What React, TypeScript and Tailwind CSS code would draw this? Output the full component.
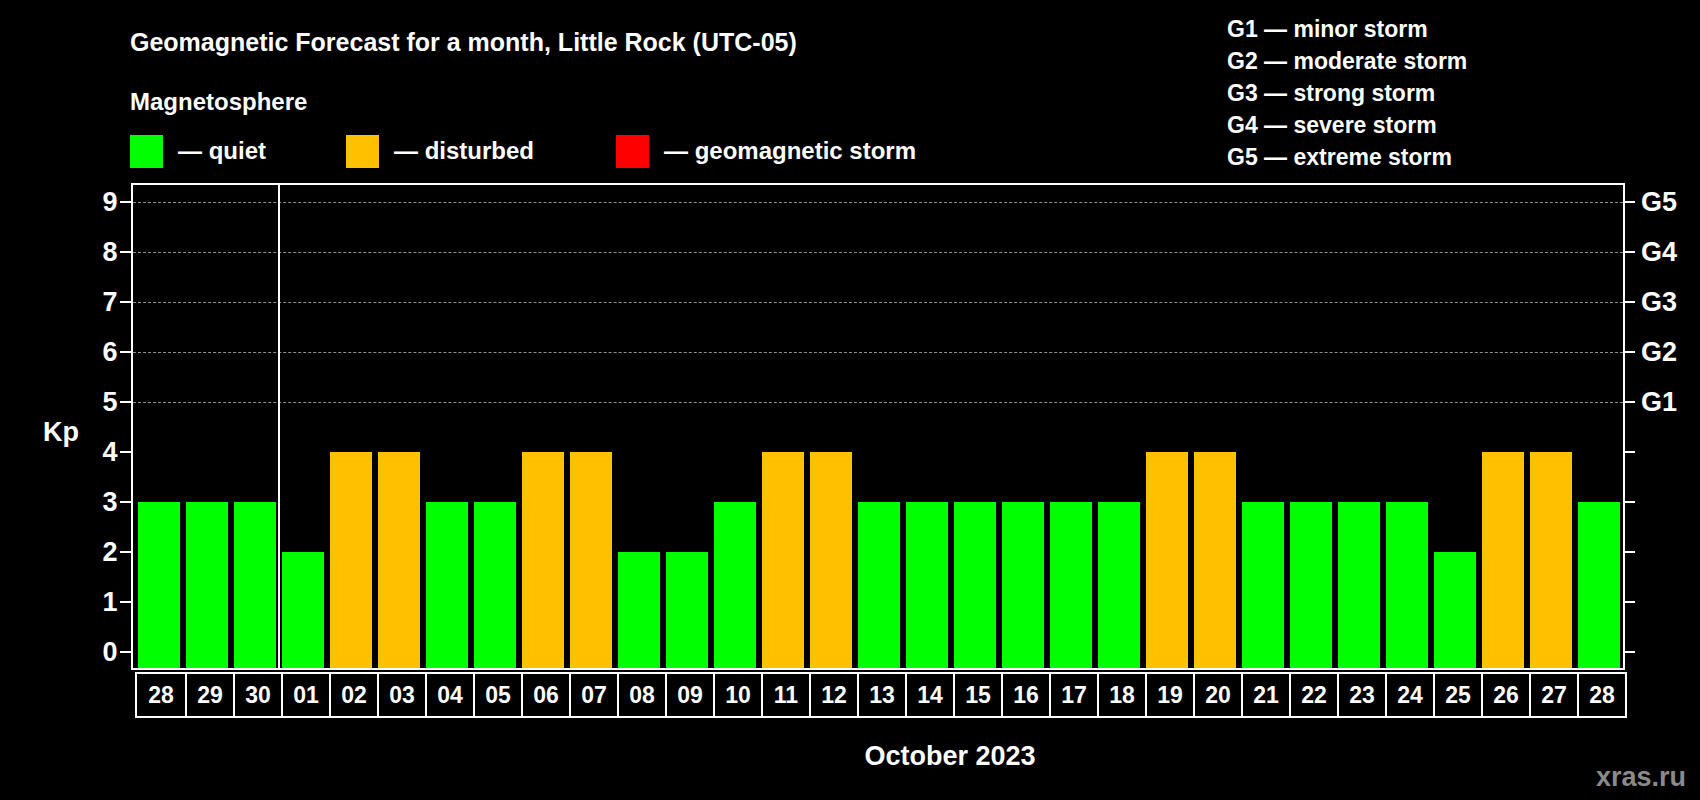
import React from "react";

const data: [string, number][] = [
  ["28",3],["29",3],["30",3],["01",2],["02",4],["03",4],["04",3],["05",3],["06",4],["07",4],
  ["08",2],["09",2],["10",3],["11",4],["12",4],["13",3],["14",3],["15",3],["16",3],["17",3],
  ["18",3],["19",4],["20",4],["21",3],["22",3],["23",3],["24",3],["25",2],["26",4],["27",4],["28",3],
];
const font = { fontFamily: '"Liberation Sans", Arial, sans-serif' };

export default function App() {
  const levels = [0,1,2,3,4,5,6,7,8,9];
  return (
    <div className="relative w-[1700px] h-[800px] bg-black text-white font-bold overflow-hidden" style={font}>
      <div className="absolute left-[130px] top-[24px] text-[25px]">Geomagnetic Forecast for a month, Little Rock (UTC-05)</div>
      <div className="absolute left-[130px] top-[84px] text-[24px]">Magnetosphere</div>
      <div className="absolute left-[130px] top-[133px] flex items-center text-[24px]">
        <div className="w-[33px] h-[33px] bg-[#00ff00]" />
        <span className="ml-[15px] w-[168px]">— quiet</span>
        <div className="w-[33px] h-[33px] bg-[#ffc000]" />
        <span className="ml-[15px] w-[222px]">— disturbed</span>
        <div className="w-[33px] h-[33px] bg-[#ff0000]" />
        <span className="ml-[15px]">— geomagnetic storm</span>
      </div>
      <div className="absolute left-[1227px] top-[13px] flex flex-col text-[23px] leading-[32px]">
        <span>G1 — minor storm</span>
        <span>G2 — moderate storm</span>
        <span>G3 — strong storm</span>
        <span>G4 — severe storm</span>
        <span>G5 — extreme storm</span>
      </div>
      <div className="absolute left-[43px] top-[412px] text-[27px]">Kp</div>
      {levels.map(k => (
        <React.Fragment key={k}>
          <div className="absolute left-[100px] w-[20px] text-[27px] leading-[30px] text-center" style={{ top: 652 - 50*k - 15 }}>{k}</div>
          <div className="absolute left-[120px] w-[11px] h-[2px] bg-white" style={{ top: 651 - 50*k }} />
          <div className="absolute left-[1625px] w-[10px] h-[2px] bg-white" style={{ top: 651 - 50*k }} />
          {k >= 5 && (
            <>
              <div className="absolute left-[133px] w-[1490px] border-t border-dashed border-[#909090]" style={{ top: 652 - 50*k }} />
              <div className="absolute left-[1641px] text-[27px] leading-[30px]" style={{ top: 652 - 50*k - 15 }}>G{k-4}</div>
            </>
          )}
        </React.Fragment>
      ))}
      <div className="absolute left-[131px] top-[183px] w-[1494px] h-[487px] border-2 border-white flex items-end pl-[5px] gap-[6px]">
        {data.map(([d, v], i) => (
          <div key={i} className={"w-[42px] " + (v >= 4 ? "bg-[#ffc000]" : "bg-[#00ff00]")} style={{ height: v*50 + 16 }} />
        ))}
      </div>
      <div className="absolute left-[278px] top-[183px] w-[2px] h-[487px] bg-white" />
      <div className="absolute left-[135px] top-[672px] flex border-2 border-white">
        {data.map(([d], i) => (
          <div key={i} className={"w-[48px] h-[42px] flex items-center justify-center text-[23px] " + (i > 0 ? "border-l-2 border-white" : "")}>{d}</div>
        ))}
      </div>
      <div className="absolute left-[850px] w-[200px] text-center top-[736px] text-[27px]">October 2023</div>
      <div className="absolute left-[1596px] top-[757px] text-[27px] text-[#8a8a8a]">xras.ru</div>
    </div>
  );
}
